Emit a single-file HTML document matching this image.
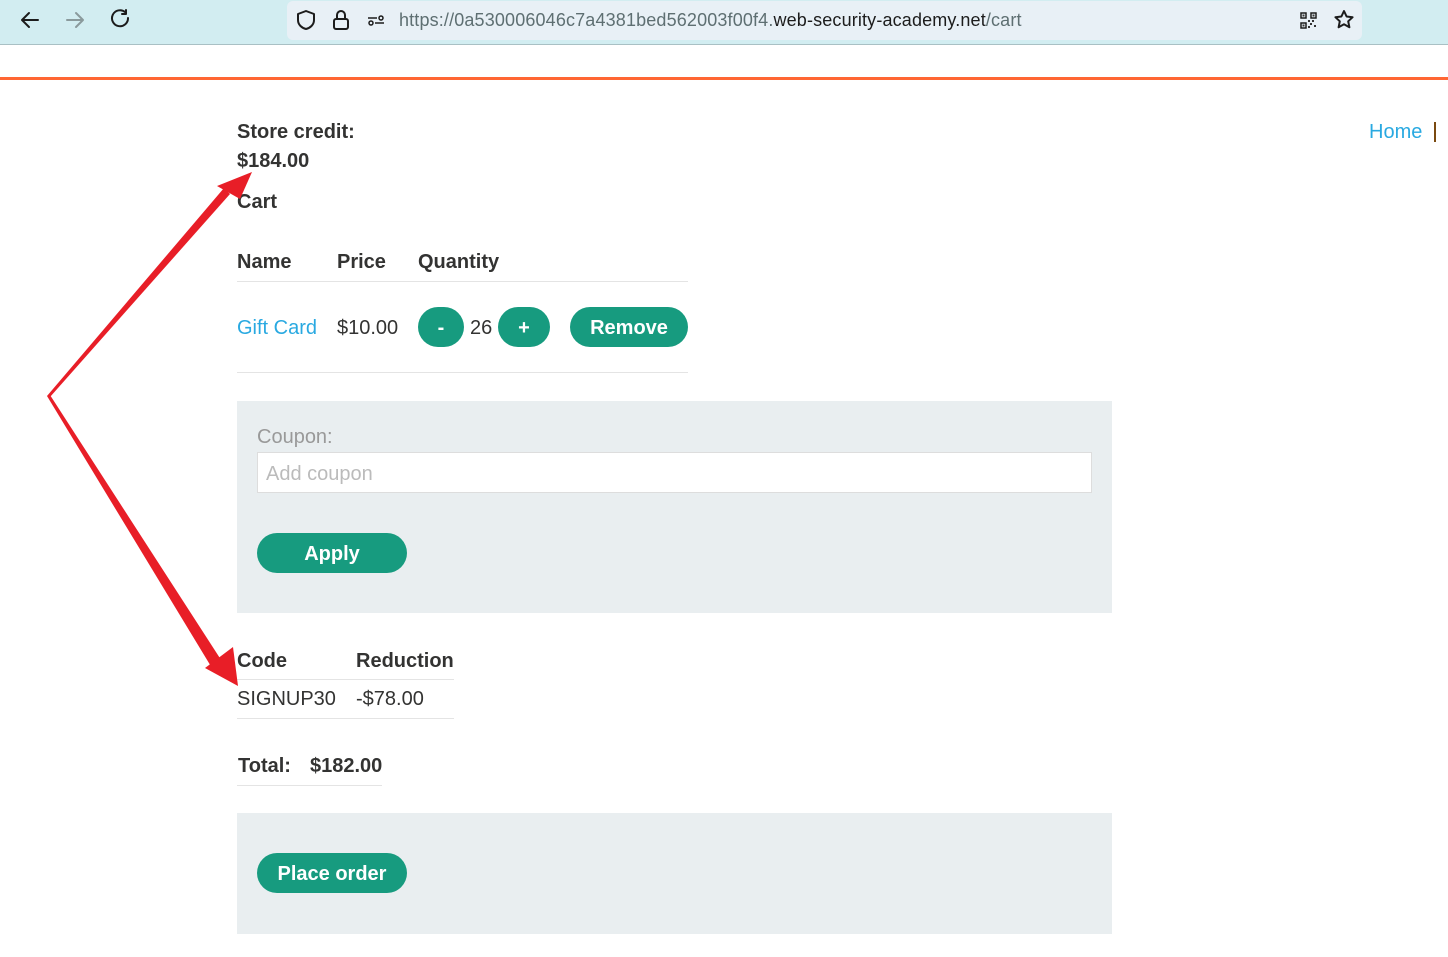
<!DOCTYPE html>
<html><head><meta charset="utf-8"><style>
*{margin:0;padding:0;box-sizing:border-box}
body{width:1448px;height:957px;overflow:hidden;background:#fff;font-family:"Liberation Sans",Arial,sans-serif;color:#333332;position:relative}
.a{position:absolute;white-space:nowrap}
.t{margin-top:1px}
.b{font-weight:bold;font-size:20px;margin-top:1px}
.n{font-size:20px;margin-top:1px}
.btn{position:absolute;background:#179b7f;color:#fff;font-weight:bold;font-size:20px;border-radius:20px;height:40px;line-height:42px;text-align:center}
.hr{position:absolute;height:1px;background:#e4e4e4}
.box{position:absolute;background:#e9eef0}
</style></head><body>
<div class="a" style="left:0;top:0;width:1448px;height:45px;background:#d2edf1;border-bottom:1px solid #a9c0c4"></div>
<div class="a" style="left:287px;top:1px;width:1075px;height:39px;background:#e8f0f6;border-radius:6px"></div>
<svg class="a" style="left:0;top:0" width="1448" height="45">
<g fill="none" stroke="#1c1c1c" stroke-width="2" stroke-linecap="round" stroke-linejoin="round">
<path d="M38 20H22M29 13l-7 7 7 7"/>
<path d="M67 20h16M76 13l7 7-7 7" stroke="#8a9a9c"/>
<path d="M128 18a8 8 0 1 1-3-6"/><path d="M126 10v4h-4"/>
<path d="M306 11l8 3v6c0 5-4 8-8 9-4-1-8-4-8-9v-6z"/>
<rect x="334" y="19" width="14" height="10" rx="2"/><path d="M337 19v-4a4 4 0 0 1 8 0v4"/>
<path d="M1344 11l2.6 5.5 6 .7-4.4 4.1 1.2 6-5.4-3-5.4 3 1.2-6-4.4-4.1 6-.7z"/>
</g>
<g fill="none" stroke="#1c1c1c" stroke-width="1.5">
<path d="M375 23h9M368 18h9"/><circle cx="371" cy="23" r="2"/><circle cx="381" cy="18" r="2"/>
<rect x="1301" y="13" width="5" height="5"/><rect x="1311" y="13" width="5" height="5"/><rect x="1301" y="23" width="5" height="5"/>
</g>
<g fill="#333"><rect x="1308" y="20" width="2" height="2"/><rect x="1312" y="20" width="2" height="2"/><rect x="1310" y="23" width="2" height="2"/><rect x="1314" y="25" width="2" height="2"/><rect x="1308" y="26" width="2" height="2"/><rect x="1302.5" y="14.5" width="2" height="2"/><rect x="1312.5" y="14.5" width="2" height="2"/><rect x="1302.5" y="24.5" width="2" height="2"/></g>
</svg>
<div class="a" style="left:399px;top:10px;font-size:18px;color:#5e6f72;letter-spacing:0.15px">https://0a530006046c7a4381bed562003f00f4.<span style="color:#1c1c1c">web-security-academy.net</span>/cart</div>
<div class="a" style="left:0;top:77px;width:1448px;height:3px;background:#ff6633"></div>
<div class="a n" style="left:1369px;top:120px;color:#29a9e1">Home</div>
<div class="a" style="left:1434px;top:122px;width:2px;height:20px;background:#7a4a10"></div>
<div class="a b" style="left:237px;top:120px">Store credit:</div>
<div class="a b" style="left:237px;top:149px">$184.00</div>
<div class="a b" style="left:237px;top:190px">Cart</div>
<div class="a b" style="left:237px;top:250px">Name</div>
<div class="a b" style="left:337px;top:250px">Price</div>
<div class="a b" style="left:418px;top:250px">Quantity</div>
<div class="hr" style="left:237px;top:281px;width:451px"></div>
<div class="a n" style="left:237px;top:316px;color:#29a9e1">Gift Card</div>
<div class="a n" style="left:337px;top:316px">$10.00</div>
<div class="btn" style="left:418px;top:307px;width:46px">-</div>
<div class="a n" style="left:470px;top:316px">26</div>
<div class="btn" style="left:498px;top:307px;width:52px">+</div>
<div class="btn" style="left:570px;top:307px;width:118px">Remove</div>
<div class="hr" style="left:237px;top:372px;width:451px"></div>
<div class="box" style="left:237px;top:401px;width:875px;height:212px"></div>
<div class="a n" style="left:257px;top:425px;color:#999">Coupon:</div>
<div class="a" style="left:257px;top:452px;width:835px;height:41px;background:#fff;border:1px solid #ddd"></div>
<div class="a n" style="left:266px;top:462px;color:#bbb">Add coupon</div>
<div class="btn" style="left:257px;top:533px;width:150px">Apply</div>
<div class="a b" style="left:237px;top:649px">Code</div>
<div class="a b" style="left:356px;top:649px">Reduction</div>
<div class="hr" style="left:237px;top:679px;width:217px"></div>
<div class="a n" style="left:237px;top:687px">SIGNUP30</div>
<div class="a n" style="left:356px;top:687px">-$78.00</div>
<div class="hr" style="left:237px;top:718px;width:217px"></div>
<div class="a b" style="left:238px;top:754px">Total:</div>
<div class="a b" style="left:310px;top:754px">$182.00</div>
<div class="hr" style="left:237px;top:785px;width:145px"></div>
<div class="box" style="left:237px;top:813px;width:875px;height:121px"></div>
<div class="btn" style="left:257px;top:853px;width:150px">Place order</div>
<svg class="a" style="left:0;top:0" width="1448" height="957">
<g fill="#e81e27">
<polygon points="47,396 50,397 230,194 224,188"/>
<polygon points="252,172 217,186 240,199"/>
<polygon points="47,396 50,395 225,666 215,673"/>
<polygon points="238,686 205,668 233,647"/>
</g>
</svg>
</body></html>
